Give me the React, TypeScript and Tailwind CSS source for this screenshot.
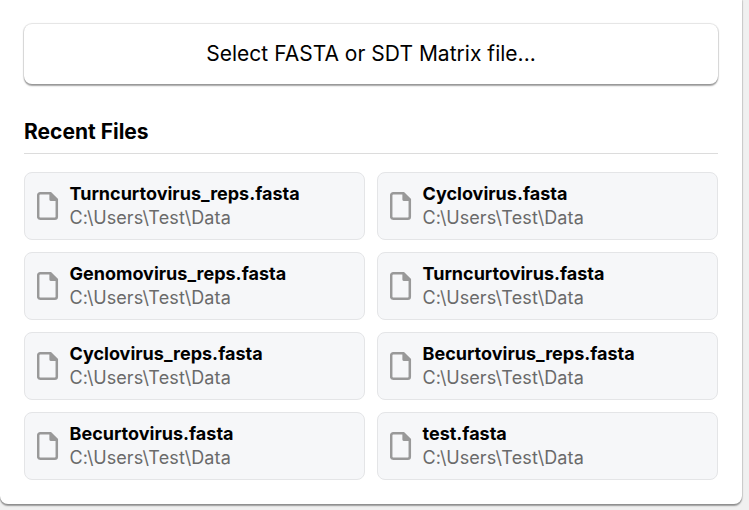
const files = [
  "Turncurtovirus_reps.fasta",
  "Cyclovirus.fasta",
  "Genomovirus_reps.fasta",
  "Turncurtovirus.fasta",
  "Cyclovirus_reps.fasta",
  "Becurtovirus_reps.fasta",
  "Becurtovirus.fasta",
  "test.fasta",
];

function FileIcon() {
  return (
    <svg className="h-7 w-[22px] shrink-0" viewBox="0 0 22 28" fill="none">
      <path
        d="M3.2 1.3h10.3L19.8 7.6V24.7a2 2 0 0 1-2 2H3.2a2 2 0 0 1-2-2V3.3a2 2 0 0 1 2-2Z"
        stroke="#999999"
        strokeWidth="2.5"
      />
      <path d="M12.4 1v6.4a1.6 1.6 0 0 0 1.6 1.6h6.3V7L14.3 1Z" fill="#999999" />
    </svg>
  );
}

function FileCard({ name }: { name: string }) {
  return (
    <button className="flex h-17 items-center gap-[10.5px] rounded-lg border border-[#e4e5e7] bg-[#f6f7f9] pl-3 text-left">
      <FileIcon />
      <span className="block pb-px">
        <span className="block text-[18px] leading-6 font-bold text-black">{name}</span>
        <span className="block text-[18px] leading-6 tracking-[0.1px] text-[#6a6a6a]">C:\Users\Test\Data</span>
      </span>
    </button>
  );
}

export default function App() {
  return (
    <div className="h-[510px] overflow-hidden bg-[#f0f0f0] font-['Inter',sans-serif]">
      <main className="h-[504px] w-[742px] rounded-b-lg bg-white px-6 pt-6 shadow-[0_0_1px_1px_rgba(0,0,0,0.1),0_1.5px_1.5px_rgba(0,0,0,0.35)]">
        <button className="h-[60px] w-[694px] rounded-lg bg-white text-[21px] tracking-[0.02px] text-black shadow-[0_0_1px_1px_rgba(0,0,0,0.1),0_1.5px_1.5px_rgba(0,0,0,0.35)]">
          Select FASTA or SDT Matrix file...
        </button>
        <h2 className="mt-8 h-[38px] w-[694px] border-b border-[#dcdcdc] text-[21px] leading-8 font-bold text-black">
          Recent Files
        </h2>
        <div className="mt-[18px] grid w-[694px] grid-cols-2 gap-3">
          {files.map((name) => (
            <FileCard key={name} name={name} />
          ))}
        </div>
      </main>
    </div>
  );
}
